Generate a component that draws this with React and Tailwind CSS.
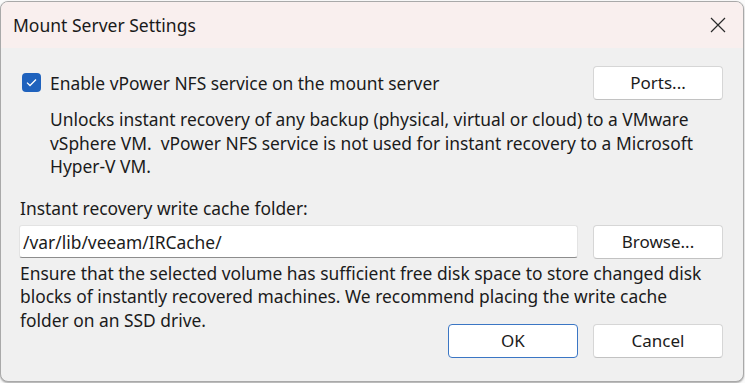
import { useState } from "react";

const font = { fontFamily: '"Noto Sans", "Open Sans", Arial, sans-serif' };

const Button = ({ children, primary }) => (
    <button
        className={
            primary
                ? "w-[130px] h-[34px] rounded-[4px] bg-white border border-[#3b76c4] text-[17px] text-[#1b1b1b]"
                : "w-[130px] h-[34px] rounded-[4px] bg-white border border-[#d6d6d6] border-b-[#c2c2c2] text-[17px] text-[#1b1b1b]"
        }
    >
        {children}
    </button>
);

const MountServerSettings = () => {
    const [enabled, setEnabled] = useState(true);
    const [folder, setFolder] = useState("/var/lib/veeam/IRCache/");

    return (
        <div className="w-[745px] h-[383px] bg-[#fbfbfb] overflow-hidden" style={font}>
            <div className="w-[744px] h-[381px] mt-[1px] rounded-[8px] border border-[#a9a9a9] bg-[#f0f0f0] overflow-hidden shadow-[0_1px_2px_rgba(0,0,0,0.35)] flex flex-col">
                {/* title bar */}
                <div className="h-[46px] bg-[#f9efee] flex items-center justify-between pl-[12px] pr-[16px]">
                    <span className="text-[17.5px] text-[#1a1a1a]">Mount Server Settings</span>
                    <svg width="16" height="16" viewBox="0 0 16 16" className="mr-[1px]">
                        <path d="M1 1 L15 15 M15 1 L1 15" stroke="#2a2a2a" strokeWidth="1.2" fill="none" />
                    </svg>
                </div>

                <div className="flex-1 pl-[18px] pr-[20px] pt-[18px] text-[17.4px] text-[#1b1b1b]">
                    <div className="flex items-center justify-between h-[34px]">
                        <label className="flex items-center gap-[9px] pl-[3px] cursor-pointer">
                            <span
                                onClick={() => setEnabled(!enabled)}
                                className={
                                    enabled
                                        ? "w-[19px] h-[19px] rounded-[4px] bg-[#1f62bd] flex items-center justify-center"
                                        : "w-[19px] h-[19px] rounded-[4px] bg-white border border-[#777] flex items-center justify-center"
                                }
                            >
                                {enabled && (
                                    <svg width="11" height="9" viewBox="0 0 11 9">
                                        <path d="M1 4.6 L4 7.5 L10 1.5" stroke="white" strokeWidth="1.3" fill="none" />
                                    </svg>
                                )}
                            </span>
                            <span>Enable vPower NFS service on the mount server</span>
                        </label>
                        <Button>Ports...</Button>
                    </div>

                    <p className="pl-[31px] mt-[8px] leading-[23.5px] whitespace-nowrap">
                        Unlocks instant recovery of any backup (physical, virtual or cloud) to a VMware
                        <br />
                        vSphere VM.&nbsp; vPower NFS service is not used for instant recovery to a Microsoft
                        <br />
                        Hyper-V VM.
                    </p>

                    <p className="mt-[18px] pl-[1px] leading-[23px]">Instant recovery write cache folder:</p>
                    <div className="flex items-center justify-between mt-[5px]">
                        <input
                            value={folder}
                            onChange={(e) => setFolder(e.target.value)}
                            className="w-[559px] h-[33px] bg-white border border-[#e3e3e3] border-b-[#8d8d8d] rounded-[3px] px-[3px] text-[17.4px] text-[#1b1b1b] outline-none"
                        />
                        <Button>Browse...</Button>
                    </div>

                    <p className="mt-[3px] pl-[1px] leading-[23.5px] whitespace-nowrap">
                        Ensure that the selected volume has sufficient free disk space to store changed disk
                        <br />
                        blocks of instantly recovered machines. We recommend placing the write cache
                        <br />
                        folder on an SSD drive.
                    </p>
                    <div className="flex justify-end gap-[15px] -mt-[8px]">
                        <Button primary>OK</Button>
                        <Button>Cancel</Button>
                    </div>
                </div>
            </div>
        </div>
    );
};

export default function App() {
    return <MountServerSettings />;
}
